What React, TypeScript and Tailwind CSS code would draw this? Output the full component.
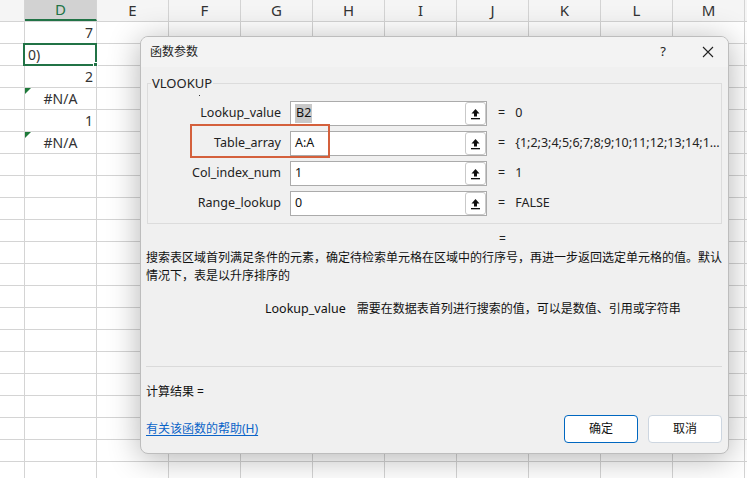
import React from 'react'

const cols = ['D', 'E', 'F', 'G', 'H', 'I', 'J', 'K', 'L', 'M']

type Cell = { text: string; align: 'left' | 'right' | 'center'; error?: boolean; selected?: boolean }

const cells: Cell[] = [
  { text: '7', align: 'right' },
  { text: '0)', align: 'left', selected: true },
  { text: '2', align: 'right' },
  { text: '#N/A', align: 'center', error: true },
  { text: '1', align: 'right' },
  { text: '#N/A', align: 'center', error: true },
]

const params = [
  { name: 'Lookup_value', value: 'B2', result: '0', highlight: true },
  { name: 'Table_array', value: 'A:A', result: '{1;2;3;4;5;6;7;8;9;10;11;12;13;14;1…' },
  { name: 'Col_index_num', value: '1', result: '1' },
  { name: 'Range_lookup', value: '0', result: 'FALSE' },
]

function RefIcon() {
  return (
    <svg width="11" height="12" viewBox="0 0 11 12">
      <path d="M5.5 1 L1.5 5.5 H4 V8.5 H7 V5.5 H9.5 Z" fill="#111" />
      <rect x="1" y="10" width="9" height="1.3" fill="#111" />
    </svg>
  )
}

function Sheet() {
  const rows = Array.from({ length: 21 }, (_, i) => cells[i])
  return (
    <div className="font-['Noto_Sans',sans-serif] text-[14px] text-[#333]">
      <div className="flex h-[22px] border-b border-[#d4d4d4] bg-[#f5f5f5]">
        <div className="w-[25px] shrink-0 border-r border-[#d4d4d4]" />
        {cols.map((c) => (
          <div
            key={c}
            className={
              c === 'D'
                ? 'flex w-[72px] shrink-0 items-center justify-center border-r border-b-2 border-r-[#d4d4d4] border-b-[#217346] bg-[#d2d2d2] text-[15px] text-[#217346]'
                : 'flex w-[72px] shrink-0 items-center justify-center border-r border-[#d4d4d4] text-[15px] text-[#333]'
            }
          >
            {c}
          </div>
        ))}
        <div className="flex-1" />
      </div>
      {rows.map((cell, i) => (
        <div key={i} className="flex h-[22px] border-b border-[#d4d4d4] bg-white">
          <div className="w-[25px] shrink-0 border-r border-[#d4d4d4]" />
          <div
            className={`relative flex w-[72px] shrink-0 items-center border-r border-[#d4d4d4] px-[3px] leading-none ${
              cell?.align === 'right' ? 'justify-end' : cell?.align === 'center' ? 'justify-center' : 'justify-start'
            }`}
          >
            {cell?.error && (
              <span className="absolute left-0 top-0 h-0 w-0 border-l-[6px] border-b-[6px] border-l-[#1e7a3a] border-b-transparent" />
            )}
            {cell?.selected && (
              <span className="absolute -left-[2px] -top-[1px] -right-[1px] -bottom-[1px] border-2 border-[#217346]">
                <span className="absolute -right-[3px] -bottom-[3px] h-[5px] w-[5px] border border-white bg-[#217346]" />
              </span>
            )}
            <span>{cell?.text ?? ''}</span>
          </div>
          {cols.slice(1).map((c) => (
            <div key={c} className="w-[72px] shrink-0 border-r border-[#d4d4d4]" />
          ))}
          <div className="flex-1" />
        </div>
      ))}
    </div>
  )
}

function Dialog() {
  return (
    <div className="absolute left-[140px] top-[36px] flex h-[418px] w-[589px] flex-col overflow-hidden rounded-[8px] border border-[#bdbdbd] bg-[#f0f0f0] font-['Noto_Sans','Noto_Sans_CJK_SC',sans-serif] text-[12px] text-[#1a1a1a] shadow-[0_4px_32px_rgba(0,0,0,0.3)]">
      <div className="flex h-[30px] shrink-0 items-center bg-[#f3f3f3] pl-[9px] pr-[14px]">
        <span className="flex-1 text-[#222]">函数参数</span>
        <span className="mr-[36px] text-[13px] text-[#222]">?</span>
        <svg width="12" height="12" viewBox="0 0 12 12">
          <path d="M1 1 L11 11 M11 1 L1 11" stroke="#222" strokeWidth="1.1" />
        </svg>
      </div>

      <div className="flex flex-1 flex-col pl-[5px] pr-[5px]">
        <div className="relative ml-[1px] mt-[16px] flex h-[141px] w-[575px] flex-col gap-[5px] border border-[#dcdcdc] pt-[17px]">
          <span className="absolute -top-[9px] left-[3px] bg-[#f0f0f0] px-[1px] leading-[16px] text-[13px] text-[#222]">
            VLOOKUP
          </span>
          <span className="absolute left-[51px] top-[11px] h-[1px] w-[1px] bg-[#333]" />
          {params.map((p) => (
            <div key={p.name} className="flex h-[25px] items-center">
              <div className="w-[134px] shrink-0 pr-[1px] text-right text-[12.5px] text-[#222]">{p.name}</div>
              <div className="ml-[8px] flex h-[25px] w-[197px] shrink-0 items-stretch border border-[#ababab] bg-white">
                <div className="flex flex-1 items-center pl-[4px] text-[12.5px] text-[#111]">
                  <span className={p.highlight ? 'bg-[#c8c8c8] px-[1px]' : ''}>{p.value}</span>
                </div>
                <div className="flex w-[21px] items-center justify-center rounded-[3px] border border-[#c9c9c9] bg-white">
                  <RefIcon />
                </div>
              </div>
              <span className="ml-[11px] shrink-0 text-[12.5px] text-[#222]">=</span>
              <span className="ml-[10px] min-w-0 whitespace-nowrap text-[12.5px] text-[#222]">{p.result}</span>
            </div>
          ))}
        </div>

        <div className="mt-[8px] h-[14px] pl-[353px] leading-[14px] text-[#222]">=</div>

        <div className="mt-[3px] whitespace-nowrap leading-[18px] text-[#111]">
          搜索表区域首列满足条件的元素，确定待检索单元格在区域中的行序号，再进一步返回选定单元格的值。默认
          <br />
          情况下，表是以升序排序的
        </div>

        <div className="mt-[15px] flex whitespace-nowrap pl-[119px] leading-[18px] text-[#111]">
          <span className="text-[12.5px]">Lookup_value</span>
          <span className="ml-[11px]">需要在数据表首列进行搜索的值，可以是数值、引用或字符串</span>
        </div>

        <div className="mr-[1px] mt-[48px] h-px bg-[#dadada]" />

        <div className="mt-[16px] leading-[18px] text-[#111]">计算结果 =</div>

        <div className="mt-[14px] flex h-[28px] items-center pr-[1px]">
          <a className="flex-1 text-[#0a64c8] underline underline-offset-2">有关该函数的帮助(H)</a>
          <button className="h-[28px] w-[74px] rounded-[4px] border border-[#0067c0] bg-white text-[12px] text-[#111]">
            确定
          </button>
          <button className="ml-[10px] h-[28px] w-[74px] rounded-[4px] border border-[#cdd6e0] bg-white text-[12px] text-[#111]">
            取消
          </button>
        </div>
      </div>

      <div className="pointer-events-none absolute left-[49px] top-[87px] h-[34px] w-[140px] border-2 border-[#d4603c]" />
    </div>
  )
}

export default function App() {
  return (
    <div className="relative h-[478px] w-[747px] overflow-hidden bg-white">
      <Sheet />
      <Dialog />
    </div>
  )
}
